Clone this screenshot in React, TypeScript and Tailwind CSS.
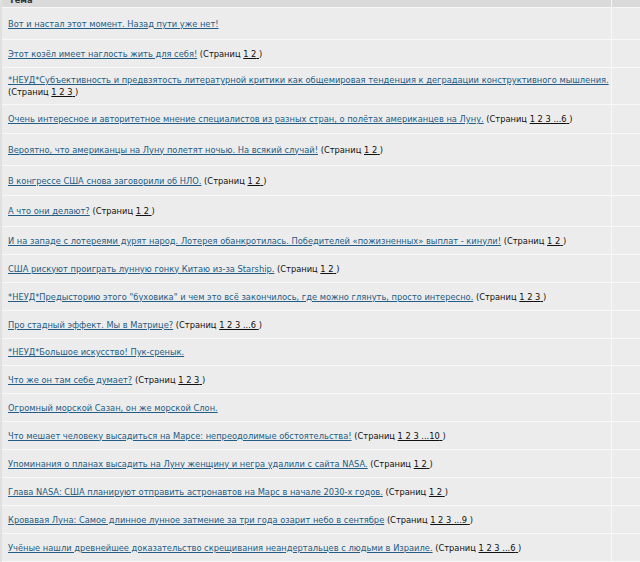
const topics: { title: string; pages?: string; h: string }[] = [
  { title: 'Вот и настал этот момент. Назад пути уже нет!', h: 'h-[32px]' },
  { title: 'Этот козёл имеет наглость жить для себя!', pages: '1 2', h: 'h-[28px]' },
  {
    title:
      '*НЕУД*Субъективность и предвзятость литературной критики как общемировая тенденция к деградации конструктивного мышления.',
    pages: '1 2 3',
    h: 'h-[37px]',
  },
  {
    title: 'Очень интересное и авторитетное мнение специалистов из разных стран, о полётах американцев на Луну.',
    pages: '1 2 3 ...6',
    h: 'h-[29px]',
  },
  { title: 'Вероятно, что американцы на Луну полетят ночью. На всякий случай!', pages: '1 2', h: 'h-[32px]' },
  { title: 'В конгрессе США снова заговорили об НЛО.', pages: '1 2', h: 'h-[30px]' },
  { title: 'А что они делают?', pages: '1 2', h: 'h-[31px]' },
  {
    title: 'И на западе с лотереями дурят народ. Лотерея обанкротилась. Победителей «пожизненных» выплат - кинули!',
    pages: '1 2',
    h: 'h-[28px]',
  },
  { title: 'США рискуют проиграть лунную гонку Китаю из-за Starship.', pages: '1 2', h: 'h-[28px]' },
  {
    title: '*НЕУД*Предысторию этого "буховика" и чем это всё закончилось, где можно глянуть, просто интересно.',
    pages: '1 2 3',
    h: 'h-[28px]',
  },
  { title: 'Про стадный эффект. Мы в Матрице?', pages: '1 2 3 ...6', h: 'h-[28px]' },
  { title: '*НЕУД*Большое искусство! Пук-сренык.', h: 'h-[27px]' },
  { title: 'Что же он там себе думает?', pages: '1 2 3', h: 'h-[28px]' },
  { title: 'Огромный морской Сазан, он же морской Слон.', h: 'h-[28px]' },
  { title: 'Что мешает человеку высадиться на Марсе: непреодолимые обстоятельства!', pages: '1 2 3 ...10', h: 'h-[28px]' },
  { title: 'Упоминания о планах высадить на Луну женщину и негра удалили с сайта NASA.', pages: '1 2', h: 'h-[28px]' },
  { title: 'Глава NASA: США планируют отправить астронавтов на Марс в начале 2030-х годов.', pages: '1 2', h: 'h-[28px]' },
  { title: 'Кровавая Луна: Самое длинное лунное затмение за три года озарит небо в сентябре', pages: '1 2 3 ...9', h: 'h-[28px]' },
  {
    title: 'Учёные нашли древнейшее доказательство скрещивания неандертальцев с людьми в Израиле.',
    pages: '1 2 3 ...6',
    h: 'h-[28px]',
  },
];

const App = () => {
  return (
    <div className="w-[640px] h-[562px] overflow-hidden bg-[#ececec] font-['DejaVu_Sans',Verdana,sans-serif] text-[8.3px] leading-[12px] text-[#111]">
      <div className="-mt-[14px] border-l-2 border-[#e0e0e0]">
        {/* header, scrolled mostly out of view */}
        <div className="flex h-[22px] bg-[#dadada] border-b border-[#f7f7f7]">
          <div className="w-[610px] pl-[7px] pt-[8px] font-bold text-[#333] border-r border-[#f7f7f7]">Тема</div>
          <div className="flex-1" />
        </div>
        {topics.map((t, i) => (
          <div key={i} className={`flex ${t.h} border-b border-[#f8f8f8]`}>
            <div className="w-[610px] flex items-center pl-[6px] pr-[2px] border-r border-[#f8f8f8]">
              <div>
                <a href="#" className="text-[#235c85] underline">
                  {t.title}
                </a>
                {t.pages && (
                  <span>
                    {' '}
                    (Страниц <span className="underline">{t.pages}&nbsp;</span>)
                  </span>
                )}
              </div>
            </div>
            <div className="flex-1" />
          </div>
        ))}
      </div>
    </div>
  );
};

export default App;
